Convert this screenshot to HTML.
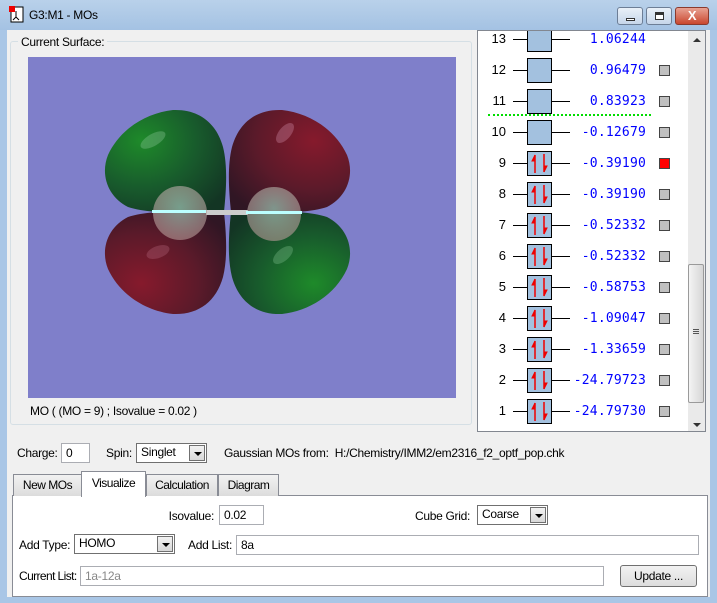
<!DOCTYPE html>
<html><head><meta charset="utf-8">
<style>
*{box-sizing:border-box}
body{margin:0;width:717px;height:603px;overflow:hidden;font-family:"Liberation Sans",sans-serif;font-size:12px;background:#a9c6e6;position:relative;letter-spacing:-0.3px}
.abs{position:absolute}
.title{left:0;top:0;width:717px;height:30px;background:linear-gradient(#b9d1ea,#a4c2e3)}
.content{left:7px;top:30px;width:703px;height:567px;background:#f0f0f0}
.grp{left:10px;top:41px;width:462px;height:384px;border:1px solid #d5dfe5;border-radius:3px}
.lbl{font-size:12px;color:#000}
.rl{position:absolute;text-align:right;font-size:12px}
.mo{left:477px;top:30px;width:212px;height:402px;background:#fff;border:1px solid #828790;overflow:hidden;letter-spacing:0}
.sb{left:688px;top:30px;width:18px;height:402px;background:#eaeaea;border:1px solid #828790;border-left:none}
.row{position:absolute;left:0;width:212px;height:24px}
.num{position:absolute;right:184px;top:4px;font-size:13px}
.ln1{position:absolute;left:35px;width:15px;top:12px;height:1px;background:#000}
.box{position:absolute;left:49px;top:0;width:25px;height:25px;background:#a3c1df;border:1px solid #000}
.ln2{position:absolute;left:74px;width:18px;top:12px;height:1px;background:#000}
.en{position:absolute;right:44px;top:5px;font-family:"DejaVu Sans Mono","Liberation Mono",monospace;font-size:13px;color:#00f;letter-spacing:0.2px}
.sq{position:absolute;left:181px;top:7px;width:11px;height:11px;background:#c0c0c0;border:1px solid #444}
.inp{position:absolute;background:#fff;border:1px solid #abadb3;height:20px;padding:2px 4px;font-size:12px}
.combo{position:absolute;background:#fff;border:1px solid #707070;height:20px;padding:1px 4px;font-size:12px}
.combo i{position:absolute;right:1px;top:1px;width:16px;height:16px;border:1px solid #707070;background:linear-gradient(#f2f2f2,#d8d8d8)}
.combo i:after{content:"";position:absolute;left:4px;top:6px;border-left:4px solid transparent;border-right:4px solid transparent;border-top:4px solid #000}
.tab{position:absolute;top:474px;height:22px;border:1px solid #898c95;border-bottom:none;background:linear-gradient(#f2f2f2,#dcdcdc);padding:3px 0;font-size:12px;text-align:center;letter-spacing:-0.5px}
</style></head><body>
<div class="abs title"></div>
<svg class="abs" style="left:8px;top:6px" width="18" height="18"><rect x="3" y="1" width="12" height="15" fill="#fff" stroke="#000"/><rect x="1" y="0" width="6" height="6" fill="#e00"/><path d="M8 5v6M8 11l-3 3M8 11l3 3" stroke="#000"/></svg>
<div class="abs" style="left:29px;top:8px;font-size:12px">G3:M1 - MOs</div>
<div class="abs" style="left:617px;top:7px;width:26px;height:18px;border:1px solid #6d7e96;border-radius:3px;background:linear-gradient(#e9f0f8,#c6d6ea)"><div class="abs" style="left:8px;top:10px;width:9px;height:3px;background:#fff;border:1px solid #333"></div></div>
<div class="abs" style="left:646px;top:7px;width:26px;height:18px;border:1px solid #6d7e96;border-radius:3px;background:linear-gradient(#e9f0f8,#c6d6ea)"><div class="abs" style="left:8px;top:4px;width:9px;height:8px;border:1px solid #333;border-top-width:3px;background:#fff"></div></div>
<div class="abs" style="left:675px;top:7px;width:34px;height:18px;border:1px solid #8a3a2e;border-radius:3px;background:linear-gradient(#e8a293,#c9472f);color:#fff;font-weight:bold;text-align:center;line-height:16px;font-size:13px">X</div>
<div class="abs content"></div>
<div class="abs grp"></div>
<div class="abs lbl" style="left:18px;top:35px;background:#f0f0f0;padding:0 3px">Current Surface:</div>
<svg class="abs" style="left:28px;top:57px" width="428" height="341">
<defs>
<radialGradient id="g" cx="0.3" cy="0.3" r="0.85"><stop offset="0" stop-color="#1e8a2a"/><stop offset="0.55" stop-color="#185a2c"/><stop offset="1" stop-color="#133524"/></radialGradient>
<radialGradient id="r" cx="0.3" cy="0.3" r="0.85"><stop offset="0" stop-color="#861a2c"/><stop offset="0.55" stop-color="#5c1a2a"/><stop offset="1" stop-color="#301624"/></radialGradient>
<radialGradient id="s" cx="0.5" cy="0.4" r="0.6"><stop offset="0" stop-color="#8fb5a5" stop-opacity="0.8"/><stop offset="1" stop-color="#b89a98" stop-opacity="0.6"/></radialGradient>
<path id="lobe" d="M100 150 C80 140 72 118 80 98 C92 72 118 56 145 53 C170 52 188 65 195 90 C200 110 198 135 196 155 C170 156 125 158 100 150 Z"/>
</defs>
<rect width="428" height="341" fill="#7f7fca"/>
<use href="#lobe" fill="url(#g)"/>
<g transform="translate(399,0) scale(-1,1)"><use href="#lobe" fill="url(#r)"/></g>
<g transform="translate(0,310) scale(1,-1)"><use href="#lobe" fill="url(#r)"/></g>
<g transform="translate(399,310) scale(-1,-1)"><use href="#lobe" fill="url(#g)"/></g>
<ellipse cx="125" cy="83" rx="14" ry="6" transform="rotate(-30 125 83)" fill="#8ec89a" opacity="0.35"/>
<ellipse cx="257" cy="76" rx="12" ry="6" transform="rotate(-50 257 76)" fill="#d090a8" opacity="0.35"/>
<ellipse cx="130" cy="195" rx="12" ry="6" transform="rotate(-20 130 195)" fill="#c07088" opacity="0.3"/>
<ellipse cx="255" cy="198" rx="12" ry="6" transform="rotate(-40 255 198)" fill="#80c090" opacity="0.35"/>
<rect x="178" y="153" width="42" height="5" fill="#ccc"/>
<circle cx="152" cy="156" r="27" fill="url(#s)"/>
<circle cx="246" cy="157" r="27" fill="url(#s)"/>
<rect x="124" y="153" width="54" height="3" fill="#bff"/>
<rect x="218" y="154" width="56" height="3" fill="#bff"/>
</svg>
<div class="abs lbl" style="left:30px;top:404px">MO ( (MO = 9) ; Isovalue = 0.02 )</div>

<div class="abs mo">
<div style="position:absolute;left:10px;top:83px;width:163px;border-top:2px dotted #0d0"></div>
<div class="row" style="top:-4px"><span class="num">13</span><div class="ln1"></div><div class="box"></div><div class="ln2"></div><span class="en">1.06244</span></div>
<div class="row" style="top:27px"><span class="num">12</span><div class="ln1"></div><div class="box"></div><div class="ln2"></div><span class="en">0.96479</span><div class="sq"></div></div>
<div class="row" style="top:58px"><span class="num">11</span><div class="ln1"></div><div class="box"></div><div class="ln2"></div><span class="en">0.83923</span><div class="sq"></div></div>
<div class="row" style="top:89px"><span class="num">10</span><div class="ln1"></div><div class="box"></div><div class="ln2"></div><span class="en">-0.12679</span><div class="sq"></div></div>
<div id="occ"></div>
</div>
<div class="abs sb"><div class="abs" style="left:5px;top:7px;border-left:4px solid transparent;border-right:4px solid transparent;border-bottom:4px solid #333"></div><div class="abs" style="left:0px;top:233px;width:16px;height:139px;border:1px solid #9a9a9a;border-radius:2px;background:linear-gradient(90deg,#f4f4f4,#d6d6d6)"><div class="abs" style="left:4px;top:64px;width:6px;height:5px;border-top:1px solid #555;border-bottom:1px solid #555"></div><div class="abs" style="left:4px;top:66px;width:6px;height:1px;background:#555"></div></div><div class="abs" style="left:5px;top:392px;border-left:4px solid transparent;border-right:4px solid transparent;border-top:4px solid #333"></div></div>

<div class="abs lbl" style="left:17px;top:446px">Charge:</div>
<div class="inp" style="left:61px;top:443px;width:29px">0</div>
<div class="abs lbl" style="left:106px;top:446px">Spin:</div>
<div class="combo" style="left:136px;top:443px;width:71px">Singlet<i></i></div>
<div class="abs lbl" style="left:224px;top:446px">Gaussian MOs from:&nbsp; H:/Chemistry/IMM2/em2316_f2_optf_pop.chk</div>

<div class="abs" style="left:12px;top:495px;width:696px;height:102px;background:#fff;border:1px solid #898c95"></div>
<div class="tab" style="left:13px;width:69px">New MOs</div>
<div class="tab" style="left:81px;top:471px;height:26px;width:65px;background:#fff;padding-top:4px;border-bottom:none">Visualize</div>
<div class="tab" style="left:146px;width:72px">Calculation</div>
<div class="tab" style="left:218px;width:61px">Diagram</div>
<div class="rl" style="right:503px;top:509px">Isovalue:</div>
<div class="inp" style="left:219px;top:505px;width:45px">0.02</div>
<div class="rl" style="right:247px;top:509px">Cube Grid:</div>
<div class="combo" style="left:477px;top:505px;width:71px">Coarse<i></i></div>
<div class="abs lbl" style="left:19px;top:538px">Add Type:</div>
<div class="combo" style="left:74px;top:534px;width:101px">HOMO<i></i></div>
<div class="rl" style="right:485px;top:538px">Add List:</div>
<div class="inp" style="left:236px;top:535px;width:463px">8a</div>
<div class="abs lbl" style="left:19px;top:569px;letter-spacing:-0.6px">Current List:</div>
<div class="inp" style="left:80px;top:566px;width:524px;color:#888">1a-12a</div>
<div class="abs" style="left:620px;top:565px;width:77px;height:22px;border:1px solid #707070;border-radius:3px;background:linear-gradient(#f2f2f2,#dddddd);text-align:center;line-height:20px">Update ...</div>
<script>
var d=[["9","-0.39190",1],["8","-0.39190"],["7","-0.52332"],["6","-0.52332"],["5","-0.58753"],["4","-1.09047"],["3","-1.33659"],["2","-24.79723"],["1","-24.79730"]];
var h="";
var arr='<svg style="position:absolute;left:0;top:0" width="23" height="23"><path d="M7 21V3" stroke="#e00" stroke-width="1.5"/><path d="M7 3L4 9H7Z" fill="#e00" stroke="#e00"/><path d="M16 2V20" stroke="#e00" stroke-width="1.5"/><path d="M16 20L19 14H16Z" fill="#e00" stroke="#e00"/></svg>';
d.forEach(function(r,i){h+='<div class="row" style="top:'+(120+31*i)+'px"><span class="num">'+r[0]+'</span><div class="ln1"></div><div class="box">'+arr+'</div><div class="ln2"></div><span class="en">'+r[1]+'</span><div class="sq" style="'+(r[2]?'background:#f00':'')+'"></div></div>';});
document.getElementById("occ").outerHTML=h;
</script>
</body></html>
